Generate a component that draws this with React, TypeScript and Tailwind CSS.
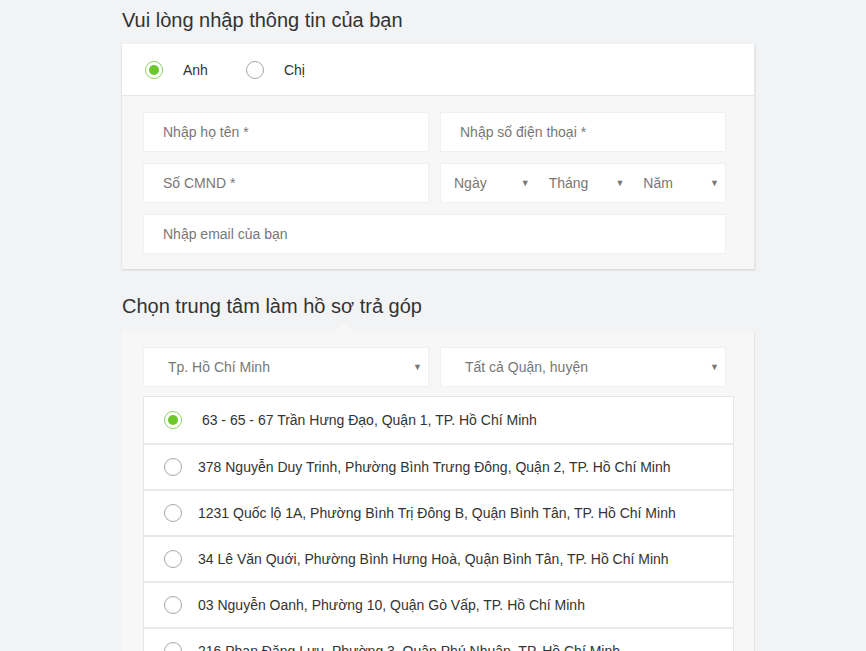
const addresses = [
  " 63 - 65 - 67 Trần Hưng Đạo, Quận 1, TP. Hồ Chí Minh",
  "378 Nguyễn Duy Trinh, Phường Bình Trưng Đông, Quận 2, TP. Hồ Chí Minh",
  "1231 Quốc lộ 1A, Phường Bình Trị Đông B, Quận Bình Tân, TP. Hồ Chí Minh",
  "34 Lê Văn Quới, Phường Bình Hưng Hoà, Quận Bình Tân, TP. Hồ Chí Minh",
  "03 Nguyễn Oanh, Phường 10, Quận Gò Vấp, TP. Hồ Chí Minh",
  "216 Phan Đăng Lưu, Phường 3, Quận Phú Nhuận, TP. Hồ Chí Minh",
]

function Radio({ checked }: { checked?: boolean }) {
  if (checked) {
    return (
      <span className="flex h-[18px] w-[18px] shrink-0 items-center justify-center rounded-full border border-[#8fd161] bg-white">
        <span className="h-[10px] w-[10px] rounded-full bg-[#6cc72b]" />
      </span>
    )
  }
  return <span className="block h-[18px] w-[18px] shrink-0 rounded-full border border-[#a8a8a8] bg-white" />
}

function Arrow() {
  return <span className="text-[9px] leading-none text-[#777]">▼</span>
}

function Field({ label }: { label: string }) {
  return (
    <div className="flex h-10 items-center rounded-[2px] border border-[#f0f0f0] bg-white pl-[19px] pr-5 text-sm text-[#777]">
      {label}
    </div>
  )
}

export default function App() {
  return (
    <main
      className="min-h-screen bg-[#f2f3f5] pl-[122px] text-[#333]"
      style={{ fontFamily: '"Liberation Sans", Arial, sans-serif' }}
    >
      <div className="w-[633px]">
        <h2 className="pt-[6px] pb-[10px] text-[20px] leading-[28px] text-[#333]">
          Vui lòng nhập thông tin của bạn
        </h2>

        <section className="bg-[#f7f7f7] shadow-[0_1px_2px_rgba(0,0,0,0.15)] border-r border-[#e6e6e6]">
          <div className="flex h-[52px] items-center border-b border-[#e6e6e6] bg-white pl-[23px] text-sm">
            <Radio checked />
            <span className="ml-[20px]">Anh</span>
            <span className="ml-[38px] flex">
              <Radio />
            </span>
            <span className="ml-[20px]">Chị</span>
          </div>
          <div className="grid grid-cols-2 gap-x-[11px] gap-y-[11px] pt-4 pb-[15px] pl-[21px] pr-[28px]">
            <Field label="Nhập họ tên *" />
            <Field label="Nhập số điện thoại *" />
            <Field label="Số CMND *" />
            <div className="grid h-10 grid-cols-3 rounded-[2px] border border-[#f0f0f0] bg-white text-sm text-[#777]">
              {["Ngày", "Tháng", "Năm"].map((t) => (
                <div key={t} className="flex items-center justify-between pl-[13px] pr-[6px]">
                  <span>{t}</span>
                  <Arrow />
                </div>
              ))}
            </div>
            <div className="col-span-2">
              <Field label="Nhập email của bạn" />
            </div>
          </div>
        </section>

        <h2 className="pt-[24px] pb-[12px] text-[20px] leading-[26px] text-[#333]">
          Chọn trung tâm làm hồ sơ trả góp
        </h2>

        <section className="relative bg-[#f7f7f7] pt-4 pl-[21px] pr-[20px] border-r border-[#e6e6e6]">
          <span className="absolute -top-[8px] left-[213px] h-0 w-0 border-x-[9px] border-b-[8px] border-x-transparent border-b-[#f7f7f7]" />
          <div className="grid grid-cols-2 gap-x-[11px] pr-[8px]">
            {["Tp. Hồ Chí Minh", "Tất cả Quận, huyện"].map((t) => (
              <div
                key={t}
                className="flex h-10 items-center justify-between rounded-[2px] border border-[#f0f0f0] bg-white pl-6 pr-[6px] text-sm text-[#777]"
              >
                <span>{t}</span>
                <Arrow />
              </div>
            ))}
          </div>
          <ul className="mt-[9px] border border-[#e6e6e6] bg-white">
            {addresses.map((a, i) => (
              <li
                key={a}
                className={`flex h-[46px] items-center gap-[16px] pl-[20px] text-sm text-[#333] ${
                  i > 0 ? "border-t-2 border-[#e8e8e8]" : ""
                }`}
              >
                <Radio checked={i === 0} />
                <span className="whitespace-pre">{a}</span>
              </li>
            ))}
          </ul>
        </section>
      </div>
    </main>
  )
}
